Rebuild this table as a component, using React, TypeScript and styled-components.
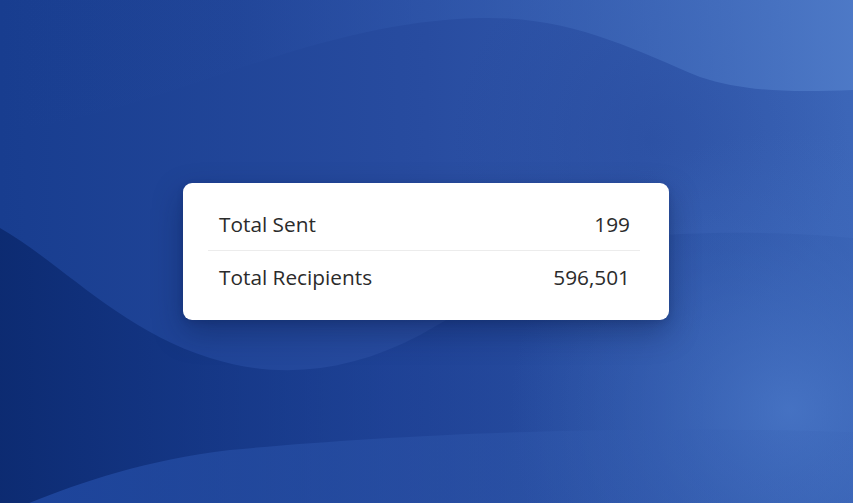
import React from "react";
import styled, { createGlobalStyle } from "styled-components";

const GlobalStyle = createGlobalStyle`
  html, body {
    margin: 0;
    padding: 0;
    width: 100%;
    height: 100%;
    overflow: hidden;
  }
  #root {
    width: 100%;
    height: 100%;
  }
`;

const Stage = styled.main`
  position: relative;
  width: 100vw;
  height: 100vh;
  display: flex;
  align-items: center;
  justify-content: center;
  background: #2a4fa2;
  overflow: hidden;
  font-family: "Open Sans", "Noto Sans", "Liberation Sans", sans-serif;
`;

const Backdrop = styled.svg`
  position: absolute;
  inset: 0;
  width: 100%;
  height: 100%;
  display: block;
`;

const Card = styled.section`
  position: relative;
  z-index: 1;
  width: 486px;
  margin-right: 1px;
  box-sizing: border-box;
  padding: 15px 29px 17px 25px;
  background: #ffffff;
  border-radius: 9px;
  box-shadow: 0 12px 30px rgba(5, 20, 60, 0.35), 0 2px 6px rgba(5, 20, 60, 0.15);
  display: flex;
  flex-direction: column;
`;

const Row = styled.div<{ $divider?: boolean }>`
  display: flex;
  align-items: center;
  justify-content: space-between;
  height: 52px;
  padding: 0 10px 0 11px;
  border-bottom: ${(p) => (p.$divider ? "1px solid #ececec" : "none")};
`;

const Label = styled.span`
  font-size: 20.8px;
  color: #2b2b2b;
`;

const Value = styled.span`
  font-size: 20.8px;
  color: #2b2b2b;
`;

const stats = [
  { label: "Total Sent", value: "199" },
  { label: "Total Recipients", value: "596,501" },
];

function WaveBackground() {
  return (
    <Backdrop viewBox="0 0 853 503" preserveAspectRatio="none" aria-hidden="true">
      <defs>
        <linearGradient id="base" x1="0" y1="0" x2="1" y2="0">
          <stop offset="0" stopColor="#183d8f" />
          <stop offset="0.5" stopColor="#284ca0" />
          <stop offset="1" stopColor="#3c66b8" />
        </linearGradient>
        <linearGradient id="dark" x1="0" y1="0" x2="1" y2="0">
          <stop offset="0" stopColor="#0c2a70" stopOpacity="0.95" />
          <stop offset="0.45" stopColor="#14378a" stopOpacity="0.45" />
          <stop offset="1" stopColor="#1a3f90" stopOpacity="0.12" />
        </linearGradient>
        <linearGradient id="top" x1="0" y1="0" x2="1" y2="0">
          <stop offset="0" stopColor="#2b52a8" stopOpacity="0" />
          <stop offset="0.28" stopColor="#2b52a8" stopOpacity="0.05" />
          <stop offset="0.5" stopColor="#3159ad" stopOpacity="0.55" />
          <stop offset="1" stopColor="#4f7bc8" stopOpacity="0.9" />
        </linearGradient>
        <linearGradient id="bottom" x1="0" y1="0" x2="1" y2="0">
          <stop offset="0" stopColor="#1f48a2" stopOpacity="0.85" />
          <stop offset="0.5" stopColor="#2d55aa" stopOpacity="0.5" />
          <stop offset="1" stopColor="#3a64b6" stopOpacity="0.2" />
        </linearGradient>
        <radialGradient id="glow" cx="790" cy="410" r="280" gradientUnits="userSpaceOnUse">
          <stop offset="0" stopColor="#4b79c9" stopOpacity="0.75" />
          <stop offset="0.6" stopColor="#3f6bbd" stopOpacity="0.3" />
          <stop offset="1" stopColor="#3f6bbd" stopOpacity="0" />
        </radialGradient>
        <radialGradient id="shade" cx="650" cy="140" r="200" gradientUnits="userSpaceOnUse">
          <stop offset="0" stopColor="#1f3f92" stopOpacity="0.3" />
          <stop offset="1" stopColor="#1f3f92" stopOpacity="0" />
        </radialGradient>
      </defs>
      <rect x="0" y="0" width="853" height="503" fill="url(#base)" />
      <rect x="0" y="0" width="853" height="503" fill="url(#shade)" />
      <path
        d="M0 228 C60 262 120 330 210 358 C280 380 350 372 420 335 C500 290 580 238 680 234 C760 231 810 234 853 238 L853 503 L0 503 Z"
        fill="url(#dark)"
      />
      <rect x="0" y="0" width="853" height="503" fill="url(#glow)" />
      <path
        d="M0 130 C150 120 300 22 480 18 C570 16 630 48 700 77 C740 90 780 93 853 90 L853 0 L0 0 Z"
        fill="url(#top)"
      />
      <path
        d="M0 515 C60 490 130 462 230 450 C380 436 600 424 853 432 L853 503 L0 503 Z"
        fill="url(#bottom)"
      />
    </Backdrop>
  );
}

export default function App() {
  return (
    <>
      <GlobalStyle />
      <Stage>
        <WaveBackground />
        <Card>
          {stats.map((s, i) => (
            <Row key={s.label} $divider={i < stats.length - 1}>
              <Label>{s.label}</Label>
              <Value>{s.value}</Value>
            </Row>
          ))}
        </Card>
      </Stage>
    </>
  );
}
